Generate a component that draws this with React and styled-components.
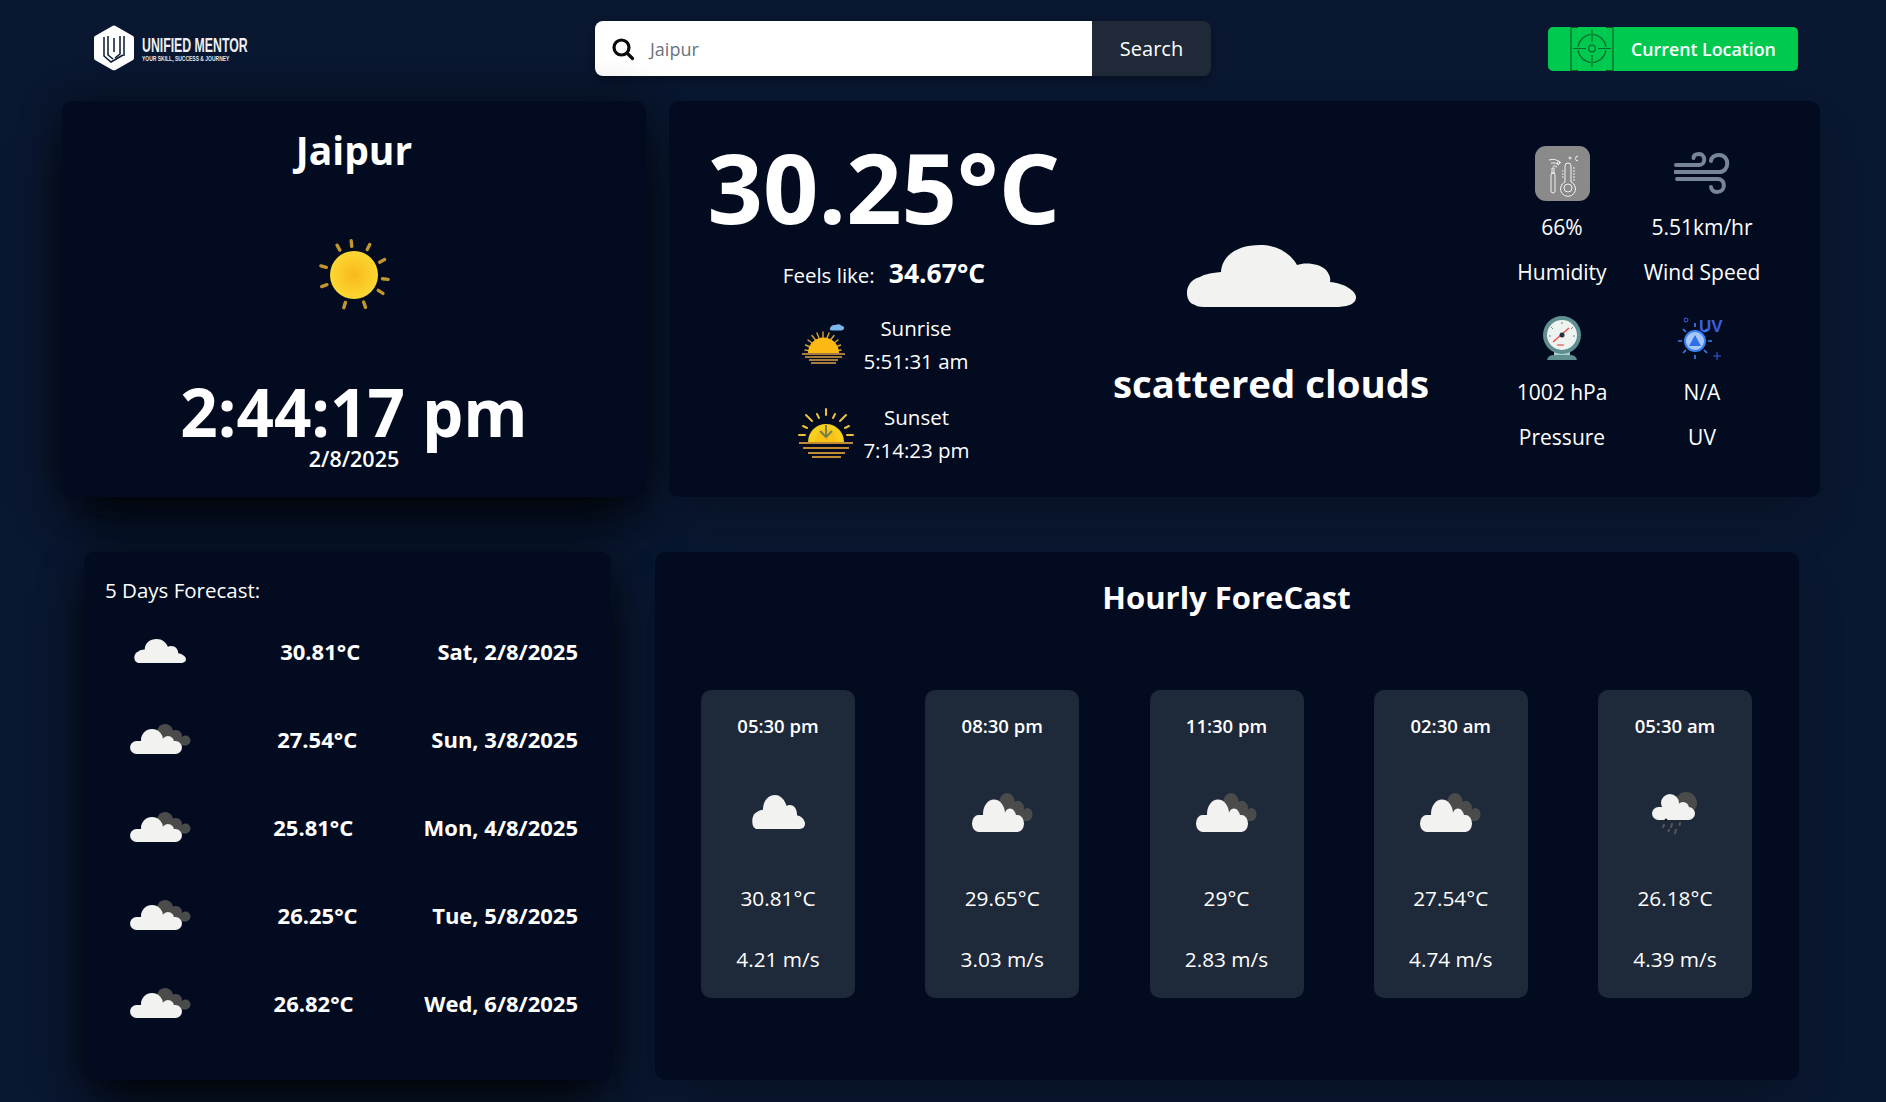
import React from 'react';
import styled, { createGlobalStyle } from 'styled-components';

const GlobalStyle = createGlobalStyle`
  html, body {
    margin: 0;
    padding: 0;
    background: #0a1730;
    color: #fff;
    font-family: "Open Sans", "Noto Sans", sans-serif;
  }
  * { box-sizing: border-box; }
`;

const Page = styled.div`
  width: 1886px;
  height: 1102px;
  overflow: hidden;
  background: #0a1730;
`;

const Header = styled.header`
  height: 101px;
  display: flex;
  align-items: flex-start;
  padding: 0 88px 0 92px;
`;

const Brand = styled.div`
  width: 503px;
  padding-top: 25px;
  display: flex;
  align-items: center;
  gap: 6px;
`;

const BrandText = styled.div`
  display: flex;
  flex-direction: column;
  transform: scaleX(0.615);
  transform-origin: left center;
  width: 100px;
  white-space: nowrap;
`;

const BrandName = styled.span`
  font-family: "Liberation Sans", sans-serif;
  font-weight: 700;
  font-size: 20px;
  line-height: 20px;
  color: #eef0f4;
`;

const BrandTag = styled.span`
  font-family: "Liberation Sans", sans-serif;
  font-weight: 700;
  font-size: 8.1px;
  line-height: 7px;
  color: #e3e6ec;
`;

const SearchBar = styled.div`
  width: 616px;
  height: 55px;
  margin-top: 21px;
  display: flex;
  border-radius: 8px;
  overflow: hidden;
  box-shadow: 0 4px 10px rgba(0, 0, 0, 0.3);
`;

const SearchInput = styled.div`
  flex: 1;
  background: #fff;
  display: flex;
  align-items: center;
  gap: 15px;
  padding-left: 16px;
  color: #6b7280;
  font-size: 18px;
`;

const SearchButton = styled.div`
  width: 119px;
  background: #1f2937;
  color: #fff;
  font-size: 20px;
  display: flex;
  align-items: center;
  justify-content: center;
`;

const LocationButton = styled.div`
  margin-left: auto;
  margin-top: 27px;
  width: 250px;
  height: 44px;
  background: #00c950;
  border-radius: 5px;
  display: flex;
  align-items: center;
  padding-left: 22px;
  gap: 17px;
  font-size: 17.8px;
  font-weight: 600;
  color: #fff;
`;

const Row = styled.section`
  display: flex;
  padding: ${p => p.$pad};
  gap: ${p => p.$gap}px;
  height: ${p => p.$height}px;
`;

const Card = styled.div`
  width: ${p => (p.$width ? `${p.$width}px` : 'auto')};
  flex: ${p => (p.$width ? 'none' : '1')};
  height: ${p => (p.$tall ? `${p.$tall}px` : 'auto')};
  background: #030b20;
  border-radius: 10px;
  box-shadow: ${p => (p.$shadow
    ? '0 25px 50px -12px #000, 0 0 40px rgba(0, 0, 0, 0.35)'
    : '0 25px 50px -12px rgba(0, 0, 0, 0.25)')};
`;

const ClockCard = styled(Card)`
  display: flex;
  flex-direction: column;
  align-items: center;
  padding-top: 24px;
`;

const City = styled.h1`
  margin: 0;
  font-size: 39px;
  line-height: 50px;
  font-weight: 700;
`;

const SunWrap = styled.div`
  margin-top: 63px;
  height: 78px;
  display: flex;
`;

const Clock = styled.div`
  margin-top: 63px;
  font-size: 65.5px;
  line-height: 66px;
  font-weight: 700;
`;

const DateLine = styled.div`
  font-size: 21.5px;
  line-height: 27px;
  font-weight: 600;
`;

const WeatherCard = styled(Card)`
  display: flex;
`;

const TempCol = styled.div`
  width: 430px;
  display: flex;
  flex-direction: column;
  align-items: center;
  padding-top: 26px;
`;

const Temp = styled.div`
  font-size: 97px;
  line-height: 118px;
  font-weight: 700;
  white-space: nowrap;
`;

const Feels = styled.div`
  margin-top: 9px;
  display: flex;
  align-items: baseline;
  gap: 14px;
  font-size: 20.5px;
  line-height: 38px;
`;

const FeelsValue = styled.span`
  font-size: 26.5px;
  font-weight: 700;
`;

const SunRow = styled.div`
  display: flex;
  align-items: center;
  gap: ${p => p.$gap}px;
  margin-top: ${p => p.$top}px;
  margin-left: ${p => p.$left}px;
`;

const SunText = styled.div`
  text-align: center;
  font-size: 20.5px;
  line-height: 33px;
`;

const ConditionCol = styled.div`
  width: 344px;
  display: flex;
  flex-direction: column;
  align-items: center;
  padding-top: 144px;
`;

const Condition = styled.div`
  margin-top: 50px;
  font-size: 38.4px;
  line-height: 53px;
  font-weight: 700;
  white-space: nowrap;
`;

const StatsGrid = styled.div`
  flex: 1;
  display: grid;
  grid-template-columns: 140px 140px;
  grid-auto-rows: 165px;
  justify-content: start;
  padding: 40px 0 0 49px;
`;

const Stat = styled.div`
  display: flex;
  flex-direction: column;
  align-items: center;
  font-size: 21px;
  line-height: 44.5px;
  white-space: nowrap;
`;

const StatIcon = styled.div`
  height: 64px;
  display: flex;
  align-items: center;
  justify-content: center;
`;

const ForecastCard = styled(Card)`
  padding: 20px 33px 0 21px;
`;

const ForecastTitle = styled.div`
  font-size: 20.5px;
  line-height: 37px;
  margin-bottom: -2px;
`;

const DayRow = styled.div`
  height: 88px;
  display: flex;
  align-items: center;
  justify-content: space-between;
  font-size: 22px;
  font-weight: 700;
  white-space: nowrap;
`;

const DayIcon = styled.div`
  width: 98px;
  padding-left: 12px;
  display: flex;
  justify-content: center;
`;

const HourlyCard = styled(Card)`
  padding: 0 47px 0 46px;
`;

const HourlyTitle = styled.h2`
  margin: 0;
  padding-top: 24px;
  text-align: center;
  font-size: 31px;
  line-height: 43px;
  font-weight: 700;
`;

const HourList = styled.div`
  margin-top: 71px;
  display: flex;
  justify-content: space-between;
`;

const HourItem = styled.div`
  width: 154px;
  height: 308px;
  background: #1e2939;
  border-radius: 10px;
  display: flex;
  flex-direction: column;
  align-items: center;
  padding-top: 24px;
`;

const HourTime = styled.div`
  font-size: 18.5px;
  line-height: 24px;
  font-weight: 600;
`;

const HourIcon = styled.div`
  margin-top: 42px;
  height: 64px;
  display: flex;
  align-items: center;
`;

const HourValue = styled.div`
  margin-top: ${p => p.$top}px;
  font-size: 20.8px;
  line-height: 27px;
`;

const LogoMark = () => (
  <svg width="44" height="46" viewBox="0 0 44 46">
    <path d="M22 0.5 Q23 0.500 24 1.200 L41 11 Q42 11.700 42 13 V33 Q42 34.300 41 35 L24 44.800 Q22 45.800 20 44.800 L3 35 Q2 34.300 2 33 V13 Q2 11.700 3 11 L20 1.200 Q21 0.500 22 0.500Z" fill="#fff" />
    <g fill="none" stroke="#0a1730" strokeWidth="1.5">
      <path d="M12 12 V31 L19 37 L31 30" />
      <path d="M16 11 V30 L21 34" />
      <path d="M28 11 V29 L23 33" />
      <path d="M32 11 V31" />
      <path d="M22 13 V27" />
    </g>
  </svg>
);

const SearchIcon = () => (
  <svg width="24" height="24" viewBox="0 0 24 24" fill="none" stroke="#0b0b0b" strokeWidth="3.2" strokeLinecap="round">
    <circle cx="10.5" cy="10.5" r="7.5" />
    <path d="M16.5 16.5 L21.5 21.5" />
  </svg>
);

const TargetIcon = () => (
  <svg width="44" height="44" viewBox="0 0 44 44" fill="none" stroke="#0a6b2d" strokeWidth="1.2">
    <path d="M1 0 V44 M43 0 V44 M1 0.5 H8 M36 0.5 H43 M1 43.5 H8 M36 43.5 H43" strokeWidth="1.1" stroke="#0c5a28" />
    <circle cx="22" cy="21.5" r="3.4" />
    <path d="M21 7.5 A14.5 14.5 0 0 0 8 20 M23 7.5 A14.5 14.5 0 0 1 36 20 M21 35.5 A14.5 14.5 0 0 1 8 23 M23 35.5 A14.5 14.5 0 0 0 36 23" />
    <path d="M22 3 V15 M22 28 V40 M3 21.5 H16 M28 21.5 H41" />
  </svg>
);

const SunIcon = () => {
  const rays = [-5, 27, 63, 97, 122, 160, 197, 250, 285, 330];
  return (
    <svg width="74" height="74" viewBox="0 0 74 74">
      <defs>
        <radialGradient id="sunFill">
          <stop offset="0" stopColor="#f9b91a" />
          <stop offset="1" stopColor="#fcd733" />
        </radialGradient>
      </defs>
      <circle cx="37" cy="37" r="24" fill="url(#sunFill)" />
      {rays.map(r => (
        <rect key={r} x="35.5" y="1" width="3.4" height="9" rx="1.7" fill="#c2962f" transform={`rotate(${r} 37 37)`} />
      ))}
    </svg>
  );
};

const SunriseIcon = () => (
  <svg width="46" height="44" viewBox="0 0 46 44">
    <path d="M29 5.500 q1-4 5-3.500 q5-1.500 6 .5 q3.500 .5 3 3 q-.5 2-3 2 h-9 q-3-.5-2-2z" fill="#7cb6ea" />
    <g stroke="#d9a53b" strokeWidth="1.4" strokeLinecap="round">
      <path d="M22 9 V15 M16 10 L18 15 M28 10 L26 15 M11 12.5 L14.5 17 M33 12.5 L29.5 17 M7 17 L11 20 M37 17 L33 20 M4.5 22 L9 24 M39.5 22 L35 24 M4 27 L7.5 27.6 M40 27 L36.500 27.6" />
    </g>
    <path d="M7 30 A15.500 15.500 0 0 1 38 30Z" fill="#fdb913" />
    <path d="M1 31 H44 M4 34 H41 M8 37 H37 M10 40 H35" stroke="#a77a3d" strokeWidth="1.8" />
  </svg>
);

const SunsetIcon = () => (
  <svg width="56" height="52" viewBox="0 0 56 52">
    <g stroke="#ecc13a" strokeWidth="2" strokeLinecap="round">
      <path d="M28 1 V7 M19 6 L21 10 M37 6 L35 10 M8 7 L14 13 M48 7 L42 13 M5 18 L9 20 M51 18 L47 20 M1 27 H7 M49 27 H55" />
    </g>
    <path d="M10 34 A18 18 0 0 1 46 34Z" fill="#f8cf1d" />
    <path d="M17 34 A11 13 0 0 1 39 34Z" fill="#fcb912" opacity="0.6" />
    <path d="M28 17 V29 M22 23 L28 29 L34 23" fill="none" stroke="#78804a" strokeWidth="2" />
    <path d="M1 35 H55 M5 40 H51 M10 45 H47 M14 49 H43" stroke="#c08b33" strokeWidth="2" />
  </svg>
);

const CLOUD = 'M9 60 C-2 58 -3 36 14 32 C17 30 23 28 35 27 C36 10 52 0 74 0 C92 0 105 9 111 20 C118 17 134 18 140 25 C143 29 145 32 144 37 C158 38 170 46 170 52 C170 60 160 62 148 62 H22 C16 62 12 62 9 60Z';

const SoloCloud = ({ width, height }) => (
  <svg width={width} height={height} viewBox="0 0 170 62" preserveAspectRatio="none">
    <path d={CLOUD} fill="#f2f2f1" />
  </svg>
);

const DoubleCloud = ({ height }) => (
  <svg width="61" height={height} viewBox="0 0 61 30" preserveAspectRatio="none">
    <g fill="#4b4b4b">
      <circle cx="35" cy="8" r="8" />
      <circle cx="46" cy="12" r="6" />
      <circle cx="55.500" cy="16.500" r="5" />
      <path d="M30 10 L46 6 L56 21.500 H36Z" />
    </g>
    <g fill="#f2f2f1">
      <rect x="0" y="17" width="52" height="13" rx="6.500" />
      <circle cx="22" cy="16" r="11" />
      <circle cx="38" cy="18" r="6" />
    </g>
  </svg>
);

const RainCloud = () => (
  <svg width="46" height="44" viewBox="0 0 46 44">
    <circle cx="34" cy="13" r="11" fill="#4b4b4b" />
    <g fill="#f2f2f1">
      <rect x="0" y="17" width="43" height="13" rx="6.500" />
      <circle cx="18" cy="13" r="9" />
      <circle cx="31" cy="18" r="6" />
    </g>
    <circle cx="14" cy="30" r="1.500" fill="#222" />
    <path d="M12 35 L11 37 M20 34 L19 37 M28 33 L27.500 35 M17 40 L16.500 41 M24 40 L23 43" stroke="#555" strokeWidth="2.200" strokeLinecap="round" />
  </svg>
);

const HumidityIcon = () => (
  <svg width="55" height="55" viewBox="0 0 55 55" fill="none" stroke="#f2f2f2" strokeWidth="1">
    <rect width="55" height="55" rx="11" fill="#8a8a8a" stroke="none" />
    <path d="M14 14 A12 12 0 0 1 26 17 M16 17 A9 9 0 0 1 24 19 M18 20 A5 5 0 0 1 22 21" />
    <circle cx="23.500" cy="17" r="1.200" />
    <rect x="16" y="27" width="4" height="20" rx="2" />
    <path d="M16 27 H20 M17 22 H19 V27 M17 22 V27" />
    <path d="M30 36 V20 A3 3 0 0 1 36 20 V36 A7.500 7.500 0 1 1 30 36Z" />
    <circle cx="33" cy="42" r="4" />
    <path d="M38 22 H40 M38 25 H40 M38 28 H40 M38 31 H40 M38 34 H40 M27 25 H28.500 M27 28 H28.500 M27 31 H28.500" />
    <circle cx="35" cy="12" r="1" />
    <path d="M43 10 A2.500 2.500 0 1 0 43 15" />
  </svg>
);

const WindIcon = () => (
  <svg width="56" height="42" viewBox="0 0 56 42" fill="none" stroke="#76859a" strokeWidth="4" strokeLinecap="round">
    <path d="M2 13 H25 C32 13 32 2 25 2 C21 2 19.500 4 19.500 6" />
    <path d="M1 20 H45 C56 20 56 3 45 3 C40 3 37 6 37 9" />
    <path d="M3 27 H44 C52 27 52 40 43 40 C39 40 37 37 37 35" />
  </svg>
);

const PressureIcon = () => (
  <svg width="40" height="46" viewBox="0 0 40 46">
    <path d="M12 36 H28 V40 H12Z" fill="#a8d2cf" />
    <path d="M5 45 Q6 40 12 40 H28 Q34 40 35 45Z" fill="#5f8f90" />
    <circle cx="20" cy="20" r="19" fill="#5f8f90" />
    <circle cx="20" cy="20" r="15" fill="#eef3ef" />
    <path d="M11 27 L27 13" stroke="#ea4f4f" strokeWidth="1.4" />
    <path d="M15 30 H22" stroke="#ea4f4f" strokeWidth="1.2" />
    <circle cx="20" cy="20" r="2.500" fill="#263238" />
    <path d="M20 7 V9 M9 12 L11 14 M31 12 L29 14 M7 21 H9 M33 21 H31" stroke="#5f8f90" strokeWidth="1" />
  </svg>
);

const UvIcon = () => (
  <svg width="50" height="46" viewBox="0 0 50 46">
    <text x="22" y="17" fontFamily="Liberation Sans, sans-serif" fontWeight="700" fontSize="17" fill="#3b5fe0">UV</text>
    <circle cx="9" cy="5" r="2" fill="none" stroke="#3b5fe0" strokeWidth="1" />
    <circle cx="18" cy="26" r="11" fill="#3b82f6" />
    <circle cx="18" cy="26" r="9" fill="#a9c8fa" />
    <path d="M18 20 L24 31 H12Z" fill="#2f6fe8" />
    <path d="M18 8 V12 M18 40 V44 M1 26 H5 M31 26 H35 M6 14 L9 17 M30 14 L27 17 M6 38 L9 35 M30 38 L27 35" stroke="#3b82f6" strokeWidth="1.6" />
    <path d="M40 37 V45 M36 41 H44" stroke="#3b5fe0" strokeWidth="1" />
  </svg>
);

const days = [
  { plain: true, temp: '30.81°C', date: 'Sat, 2/8/2025' },
  { temp: '27.54°C', date: 'Sun, 3/8/2025' },
  { temp: '25.81°C', date: 'Mon, 4/8/2025' },
  { temp: '26.25°C', date: 'Tue, 5/8/2025' },
  { temp: '26.82°C', date: 'Wed, 6/8/2025' },
];

const hours = [
  { time: '05:30 pm', icon: <SoloCloud width={53} height={34} />, temp: '30.81°C', wind: '4.21 m/s' },
  { time: '08:30 pm', icon: <DoubleCloud height={39} />, temp: '29.65°C', wind: '3.03 m/s' },
  { time: '11:30 pm', icon: <DoubleCloud height={39} />, temp: '29°C', wind: '2.83 m/s' },
  { time: '02:30 am', icon: <DoubleCloud height={39} />, temp: '27.54°C', wind: '4.74 m/s' },
  { time: '05:30 am', icon: <RainCloud />, temp: '26.18°C', wind: '4.39 m/s' },
];

const stats = [
  { icon: <HumidityIcon />, value: '66%', label: 'Humidity' },
  { icon: <WindIcon />, value: '5.51km/hr', label: 'Wind Speed' },
  { icon: <PressureIcon />, value: '1002 hPa', label: 'Pressure' },
  { icon: <UvIcon />, value: 'N/A', label: 'UV' },
];

const App = () => (
  <Page>
    <GlobalStyle />
    <Header>
      <Brand>
        <LogoMark />
        <BrandText>
          <BrandName>UNIFIED MENTOR</BrandName>
          <BrandTag>YOUR SKILL, SUCCESS &amp; JOURNEY</BrandTag>
        </BrandText>
      </Brand>
      <SearchBar>
        <SearchInput>
          <SearchIcon />
          Jaipur
        </SearchInput>
        <SearchButton>Search</SearchButton>
      </SearchBar>
      <LocationButton>
        <TargetIcon />
        Current Location
      </LocationButton>
    </Header>

    <Row $pad="0 66px 0 62px" $gap={23} $height={451}>
      <ClockCard $width={584} $tall={396} $shadow>
        <City>Jaipur</City>
        <SunWrap><SunIcon /></SunWrap>
        <Clock>2:44:17 pm</Clock>
        <DateLine>2/8/2025</DateLine>
      </ClockCard>
      <WeatherCard $tall={396}>
        <TempCol>
          <Temp>30.25°C</Temp>
          <Feels>
            Feels like: <FeelsValue>34.67°C</FeelsValue>
          </Feels>
          <SunRow $top={18} $gap={16} $left={2}>
            <SunriseIcon />
            <SunText>Sunrise<br />5:51:31 am</SunText>
          </SunRow>
          <SunRow $top={23} $gap={9} $left={0}>
            <SunsetIcon />
            <SunText>Sunset<br />7:14:23 pm</SunText>
          </SunRow>
        </TempCol>
        <ConditionCol>
          <SoloCloud width={170} height={62} />
          <Condition>scattered clouds</Condition>
        </ConditionCol>
        <StatsGrid>
          {stats.map(s => (
            <Stat key={s.label}>
              <StatIcon>{s.icon}</StatIcon>
              <span>{s.value}</span>
              <span>{s.label}</span>
            </Stat>
          ))}
        </StatsGrid>
      </WeatherCard>
    </Row>

    <Row $pad="0 87px 0 84px" $gap={44} $height={528}>
      <ForecastCard $width={527} $shadow>
        <ForecastTitle>5 Days Forecast:</ForecastTitle>
        {days.map(d => (
          <DayRow key={d.date}>
            <DayIcon>
              {d.plain ? <SoloCloud width={52} height={24} /> : <DoubleCloud height={30} />}
            </DayIcon>
            <span>{d.temp}</span>
            <span>{d.date}</span>
          </DayRow>
        ))}
      </ForecastCard>
      <HourlyCard>
        <HourlyTitle>Hourly ForeCast</HourlyTitle>
        <HourList>
          {hours.map(h => (
            <HourItem key={h.time}>
              <HourTime>{h.time}</HourTime>
              <HourIcon>{h.icon}</HourIcon>
              <HourValue $top={41}>{h.temp}</HourValue>
              <HourValue $top={34}>{h.wind}</HourValue>
            </HourItem>
          ))}
        </HourList>
      </HourlyCard>
    </Row>
  </Page>
);

export default App;
